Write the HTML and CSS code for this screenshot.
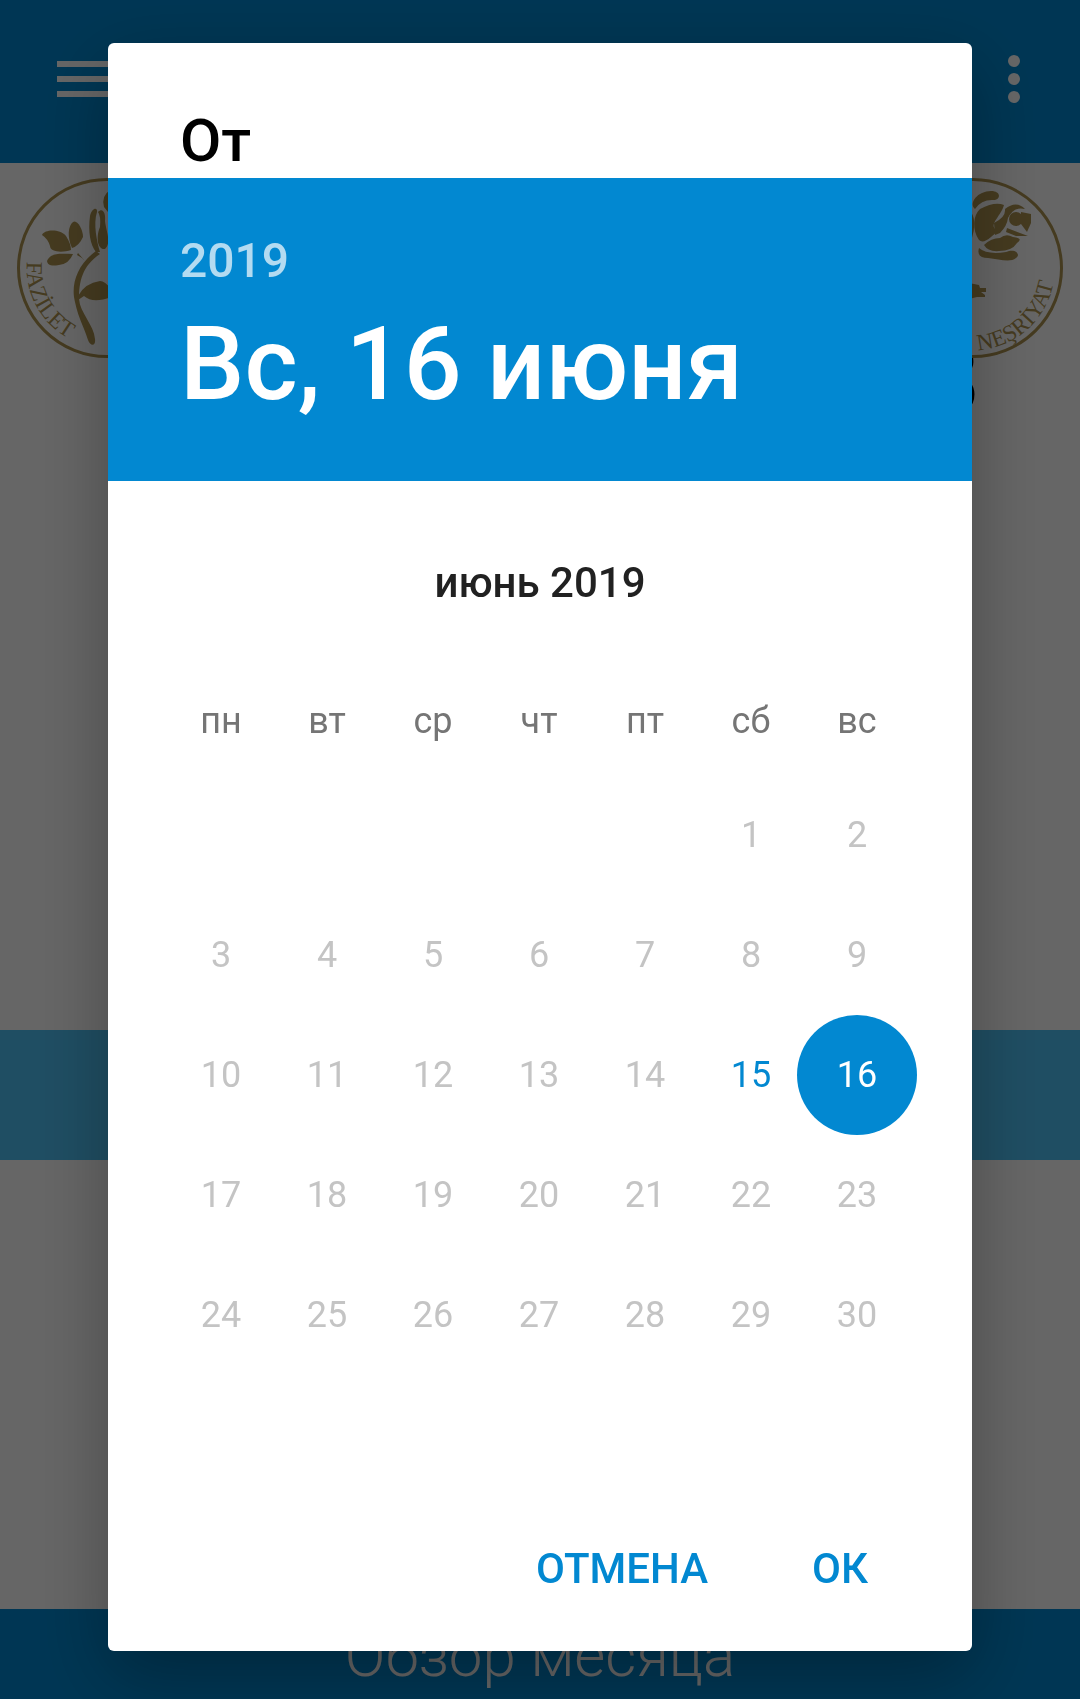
FILE: index.html
```html
<!DOCTYPE html>
<html lang="ru">
<head>
<meta charset="utf-8">
<meta name="viewport" content="width=device-width, initial-scale=1">
<title>Обзор месяца</title>
<link rel="stylesheet" href="styles.css">
</head>
<body>
<div class="app">
  <header class="app-bar">
    <button class="icon-button" type="button" aria-label="Меню">
      <svg width="60" height="36" viewBox="0 0 60 36" fill="currentColor"><path d="M0 0h60v6H0zM0 15h60v6H0zM0 30h60v6H0z"/></svg>
    </button>
    <button class="icon-button" type="button" aria-label="Ещё">
      <svg width="12" height="48" viewBox="0 0 12 48" fill="currentColor"><circle cx="6" cy="6" r="6"/><circle cx="6" cy="24" r="6"/><circle cx="6" cy="42" r="6"/></svg>
    </button>
  </header>
  <main class="content">
    <section class="hero">
      <svg class="seal" viewBox="0 0 180 180">
        <defs><path id="arc-left" d="M10 83A80 80 0 0 0 90 170"/></defs>
        <circle class="seal-ring" cx="90" cy="90" r="88.500"/>
        <g class="seal-art">
          <path d="M25 57C28 51 43 51 49 58Q54 66 54 72C45 75 33 74 33 68Q31 61 25 57Z"/>
          <path d="M55 70C50 59 51 48 56 44C60 41 66 51 66 59Q62 68 55 70Z"/>
          <path d="M30 83C34 74 44 76 56 76Q52 86 42 87C35 88 31 88 30 83Z"/>
          <path d="M61 75L68 83L65 80L60 77Z"/>
          <path d="M79 74C73 67 71 53 73 38C75 29 81 29 80 34C76 46 80 64 83 74Z"/>
          <path d="M81 34C86 29 89 36 88 43C89 53 95 65 88 71C80 72 79 58 83 49Q84 38 81 34Z"/>
          <path d="M87 29Q84 18 93 12Q101 15 99 31L91 34Z"/>
          <path d="M94 36Q104 29 103 50Q101 68 93 73Z"/>
          <path d="M79 73C61 86 55 104 57 119C61 141 67 148 71 162C73 168 79 169 78 161C77 147 63 135 62 121C62 104 65 88 83 76Z"/>
          <path d="M61 118Q68 105 83 103Q88 103 94 111L103 110L94 119Q76 126 67 118L61 122Z"/>
        </g>
        <text class="seal-text"><textPath href="#arc-left" startOffset="1">FAZİLET</textPath></text>
      </svg>
      <p class="clock">3</p>
      <svg class="seal" viewBox="0 0 180 180">
        <defs><path id="arc-right" d="M95 172A82 82 0 0 0 170 73"/></defs>
        <circle class="seal-ring" cx="90" cy="90" r="88.500"/>
        <g class="seal-art">
          <path d="M92 31C85 25 95 13 108 13C119 13 118 23 109 22Q98 22 92 31Z"/>
          <path d="M97 31Q112 23 121 27C118 38 107 45 112 51Q117 52 108 59Q100 66 96 62C89 52 90 37 97 31Z"/>
          <path d="M111 45Q123 39 122 31Q133 22 142 31Q131 28 125 40Q124 48 117 55L112 57Z"/>
          <circle cx="133" cy="41" r="7"/>
          <path d="M138 34L148 36L148 45L144 54L138 46Z"/>
          <path d="M124 50L145 58L133 58L123 54Z"/>
          <path d="M101 67Q108 60 117 60Q123 55 130 59Q141 60 134 65Q129 73 116 73Q105 74 101 67Z"/>
          <path d="M96 70Q104 77 123 74C133 70 138 77 133 80C127 85 116 81 105 80Q93 80 96 70Z"/>
          <path d="M88 34Q94 43 89 60Q88 72 84 66V34ZM86 105L96 107L97 110L103 110V114H98L102 117V119H94L86 121Z"/>
        </g>
        <text class="seal-text"><textPath href="#arc-right">NEŞRİYAT</textPath></text>
      </svg>
    </section>
    <div class="band"></div>
  </main>
  <footer class="bottom-bar"><a href="#month">Обзор месяца</a></footer>
</div>

<div class="scrim">
  <section class="dialog" role="dialog" aria-modal="true" aria-labelledby="dialog-title">
    <h1 class="dialog-title" id="dialog-title">От</h1>
    <header class="picked">
      <button class="picked-year" type="button">2019</button>
      <p class="picked-date">Вс, 16 июня</p>
    </header>
    <table class="calendar">
      <caption>июнь 2019</caption>
      <thead>
        <tr><th>пн</th><th>вт</th><th>ср</th><th>чт</th><th>пт</th><th>сб</th><th>вс</th></tr>
      </thead>
      <tbody>
        <tr><td></td><td></td><td></td><td></td><td></td><td><button class="day" disabled>1</button></td><td><button class="day" disabled>2</button></td></tr>
        <tr><td><button class="day" disabled>3</button></td><td><button class="day" disabled>4</button></td><td><button class="day" disabled>5</button></td><td><button class="day" disabled>6</button></td><td><button class="day" disabled>7</button></td><td><button class="day" disabled>8</button></td><td><button class="day" disabled>9</button></td></tr>
        <tr><td><button class="day" disabled>10</button></td><td><button class="day" disabled>11</button></td><td><button class="day" disabled>12</button></td><td><button class="day" disabled>13</button></td><td><button class="day" disabled>14</button></td><td><button class="day day-today">15</button></td><td><button class="day day-selected" aria-pressed="true">16</button></td></tr>
        <tr><td><button class="day" disabled>17</button></td><td><button class="day" disabled>18</button></td><td><button class="day" disabled>19</button></td><td><button class="day" disabled>20</button></td><td><button class="day" disabled>21</button></td><td><button class="day" disabled>22</button></td><td><button class="day" disabled>23</button></td></tr>
        <tr><td><button class="day" disabled>24</button></td><td><button class="day" disabled>25</button></td><td><button class="day" disabled>26</button></td><td><button class="day" disabled>27</button></td><td><button class="day" disabled>28</button></td><td><button class="day" disabled>29</button></td><td><button class="day" disabled>30</button></td></tr>
      </tbody>
    </table>
    <div class="actions">
      <button class="action" type="button">ОТМЕНА</button>
      <button class="action" type="button">ОК</button>
    </div>
  </section>
</div>
</body>
</html>
```
FILE: styles.css
```css
* {
  box-sizing: border-box;
}

body {
  margin: 0;
  font-family: Roboto, "Noto Sans", sans-serif;
  background: #fff;
}

button {
  padding: 0;
  border: 0;
  background: none;
  color: inherit;
  font: inherit;
}

.app {
  display: flex;
  flex-direction: column;
  min-height: 100vh;
}

.app-bar {
  display: flex;
  align-items: center;
  justify-content: space-between;
  height: 163px;
  padding: 0 60px 5px 57px;
  background: #0288d1;
  color: #fff;
}

.icon-button {
  display: flex;
}

.content {
  flex: 1;
}

.hero {
  display: flex;
  justify-content: space-between;
  align-items: flex-start;
  min-height: 867px;
  padding: 15px 17px;
}

.seal {
  position: relative;
  z-index: 1;
  flex: none;
  width: 180px;
  height: 180px;
}

.seal-ring {
  fill: #fff;
  stroke: #ad9350;
  stroke-width: 3;
}

.seal-art,
.seal-text {
  fill: #ad9350;
}

.seal-text {
  font-family: "Liberation Serif", serif;
  font-size: 23px;
}

.clock {
  flex: 1;
  margin: 142px -98px 0 0;
  font-size: 100px;
  line-height: 120px;
  text-align: right;
}

.band {
  height: 130px;
  background: #4fc3f7;
}

.bottom-bar {
  display: flex;
  align-items: center;
  justify-content: center;
  height: 90px;
  padding-top: 4px;
  background: #0288d1;
}

.bottom-bar a {
  color: #fff;
  font-size: 60px;
  font-weight: 300;
  line-height: 80px;
  text-decoration: none;
}

.scrim {
  position: fixed;
  z-index: 2;
  inset: 0;
  overflow: auto;
  padding: 43px 10% 48px;
  background: rgba(0, 0, 0, .6);
}

.dialog {
  border-radius: 6px;
  overflow: hidden;
  background: #fff;
  box-shadow: 0 24px 72px rgba(0, 0, 0, .3);
}

.dialog-title {
  margin: 0;
  padding: 63px 72px 2px;
  font-size: 60px;
  font-weight: 500;
  line-height: 70px;
}

.picked {
  padding: 55px 72px 57px;
  background: #0288d1;
  color: #fff;
  font-weight: 500;
}

.picked-year {
  display: block;
  font-size: 48px;
  line-height: 56px;
  opacity: .7;
}

.picked-date {
  margin: 15px 0 0;
  font-size: 102px;
  line-height: 120px;
}

.calendar {
  width: calc(100% - 122px);
  margin: 18px 62px 0 60px;
  border-collapse: collapse;
  table-layout: fixed;
  font-size: 36px;
}

.calendar caption {
  padding-left: 2px;
  color: #212121;
  font-size: 42px;
  font-weight: 500;
  line-height: 168px;
}

.calendar th {
  height: 108px;
  padding: 0;
  color: #757575;
  font-weight: 400;
}

.calendar td {
  height: 120px;
  padding: 0;
}

.day {
  display: block;
  width: 120px;
  height: 120px;
  margin: 0 -7px;
  border-radius: 50%;
}

.day:disabled {
  color: #c4c4c4;
}

.day-today {
  color: #0288d1;
}

.day-selected {
  background: #0288d1;
  color: #fff;
}

.actions {
  display: flex;
  justify-content: flex-end;
  gap: 56px;
  padding: 139px 80px 29px;
  color: #0288d1;
}

.action {
  height: 108px;
  padding: 0 24px;
  font-size: 42px;
  font-weight: 500;
}
```
